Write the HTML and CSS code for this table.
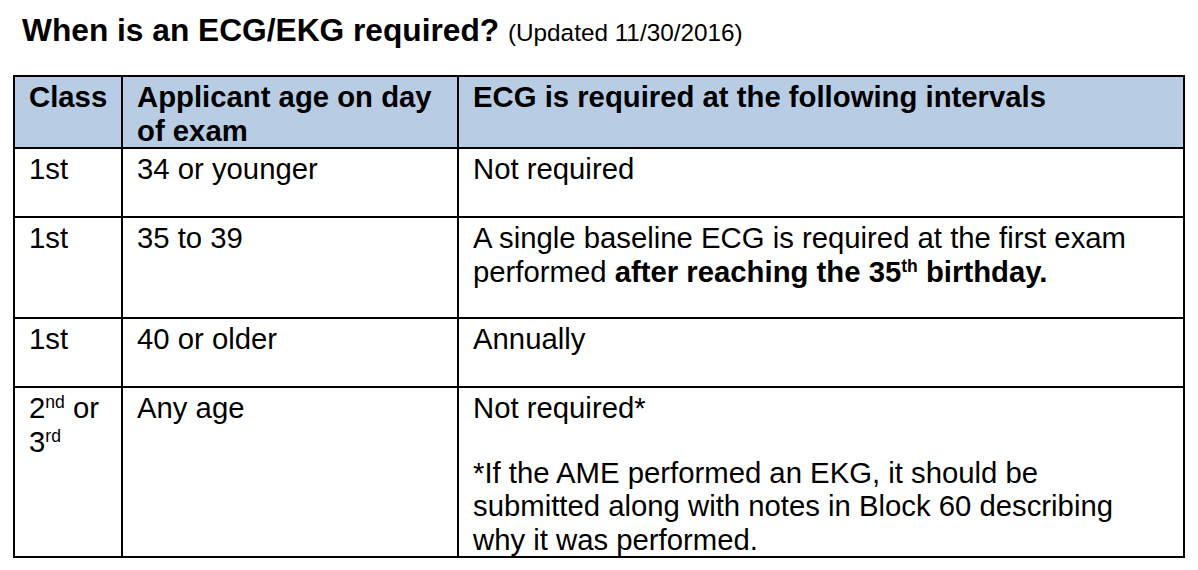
FILE: index.html
```html
<!DOCTYPE html>
<html>
<head>
<meta charset="utf-8">
<link rel="stylesheet" href="styles.css">
</head>
<body>
<div class="page">
  <h1 class="title">When is an ECG/EKG required? <span class="updated">(Updated 11/30/2016)</span></h1>
  <table class="ecg">
    <colgroup>
      <col class="c1">
      <col class="c2">
      <col class="c3">
    </colgroup>
    <thead>
      <tr class="head">
        <th>Class</th>
        <th>Applicant age on day of exam</th>
        <th>ECG is required at the following intervals</th>
      </tr>
    </thead>
    <tbody>
      <tr class="r1">
        <td>1st</td>
        <td>34 or younger</td>
        <td>Not required</td>
      </tr>
      <tr class="r2">
        <td>1st</td>
        <td>35 to 39</td>
        <td>A single baseline ECG is required at the first exam performed <b>after reaching the 35<sup>th</sup> birthday.</b></td>
      </tr>
      <tr class="r3">
        <td>1st</td>
        <td>40 or older</td>
        <td>Annually</td>
      </tr>
      <tr class="r4">
        <td>2<sup>nd</sup> or 3<sup>rd</sup></td>
        <td>Any age</td>
        <td>
          <p class="para">Not required*</p>
          <p class="para gap">*If the AME performed an EKG, it should be submitted along with notes in Block 60 describing why it was performed.</p>
        </td>
      </tr>
    </tbody>
  </table>
</div>
</body>
</html>
```

FILE: styles.css
```css
html, body {
  margin: 0;
  padding: 0;
  background: #fff;
}
body {
  font-family: "Liberation Sans", Arial, sans-serif;
  color: #000;
}
.page {
  padding: 12px 0 0 13px;
}
.title {
  margin: 0 0 24px 9px;
  font-size: 31.7px;
  font-weight: bold;
  line-height: 36px;
}
.updated {
  font-size: 24.3px;
  font-weight: normal;
}
.ecg {
  border-collapse: collapse;
  table-layout: fixed;
  width: 1170px;
  font-size: 29.3px;
  line-height: 33.5px;
}
.c1 { width: 108px; }
.c2 { width: 336px; }
.c3 { width: 726px; }
.ecg th, .ecg td {
  border: 2px solid #000;
  vertical-align: top;
  text-align: left;
  padding: 3px 14px 0 14px;
}
.ecg th {
  background: #b8cce4;
  font-weight: bold;
}
.head { height: 69px; }
.r1 { height: 69px; }
.r2 { height: 101px; }
.r3 { height: 69px; }
.r4 { height: 168px; }
sup {
  font-size: 0.6em;
  line-height: 0;
  vertical-align: 0.55em;
}
.para {
  margin: 0;
}
.para.gap {
  margin-top: 31px;
}
```
